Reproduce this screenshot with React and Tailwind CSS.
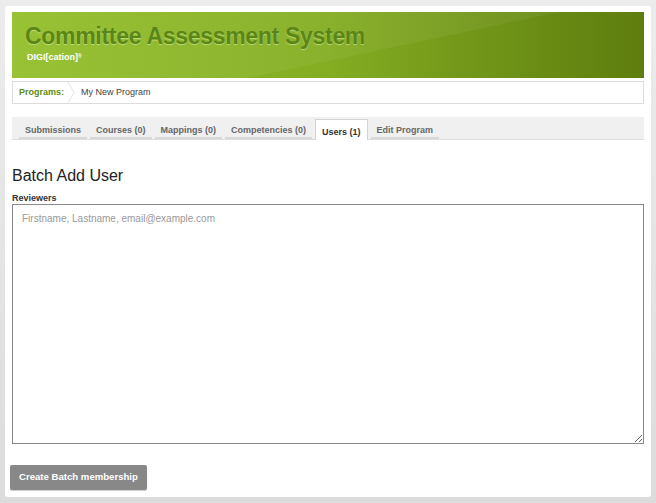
import React from 'react';

const tabs = [
  { label: 'Submissions' },
  { label: 'Courses (0)' },
  { label: 'Mappings (0)' },
  { label: 'Competencies (0)' },
  { label: 'Users (1)', active: true },
  { label: 'Edit Program' },
];

const Banner = () => (
  <div className="relative h-[66px] overflow-hidden bg-gradient-to-r from-[#93bf2a] via-[#84ad22] to-[#5e7d0e]">
    <div className="absolute inset-0 bg-[linear-gradient(168deg,rgba(255,255,255,0.05)_0%,rgba(255,255,255,0.05)_58%,rgba(0,0,0,0)_58%)]" />
    <div className="relative pl-[13px] pt-[10px]">
      <h1 className="text-[23px] leading-[28px] font-bold text-[#5a8615] [text-shadow:0_1px_1px_rgba(225,245,180,0.55)] tracking-[-0.3px]">
        Committee Assessment System
      </h1>
      <div className="mt-[1px] ml-[2px] text-[9px] font-bold leading-[12px] text-white">
        DIGI[cation]<sup className="text-[5px]">®</sup>
      </div>
    </div>
  </div>
);

const Breadcrumb = () => (
  <div className="mt-[3px] flex h-[23px] items-center border border-[#dcdcdc] bg-white text-[9px]">
    <span className="pl-[6px] font-bold text-[#5d8a16]">Programs:</span>
    <svg width="8" height="21" viewBox="0 0 8 21" className="ml-[4px]">
      <path d="M0 0 L6 10.5 L0 21" fill="none" stroke="#e2e2e2" strokeWidth="1" />
    </svg>
    <span className="ml-[5px] text-[#444]">My New Program</span>
  </div>
);

const Tabs = () => (
  <div className="mt-[13px] flex h-[23px] items-end gap-[3px] border-b border-[#ddd] bg-[#f0f0f0] pl-[7px]">
    {tabs.map((t) =>
      t.active ? (
        <div
          key={t.label}
          className="-mb-px flex h-[21px] items-center border border-b-0 border-[#d4d4d4] bg-white px-[6px] pt-[5px] text-[9px] font-bold leading-none text-[#333]"
        >
          {t.label}
        </div>
      ) : (
        <div
          key={t.label}
          className="flex h-[20px] items-center border-b-2 border-[#d8d8d8] px-[6px] pt-[5px] text-[9px] font-bold leading-none text-[#666]"
        >
          {t.label}
        </div>
      )
    )}
  </div>
);

export default function App() {
  return (
    <div className="h-[503px] w-[656px] bg-gradient-to-b from-[#ececec] to-[#dcdcdc] p-[6px_5px] font-['Liberation_Sans',Arial,sans-serif]">
      <div className="h-[491px] rounded-[3px] bg-white px-[7px] pt-[6px]">
        <Banner />
        <Breadcrumb />
        <Tabs />
        <h2 className="mt-[26px] text-[16px] leading-[20px] text-[#222]">Batch Add User</h2>
        <label className="mt-[7px] block text-[9px] font-bold leading-[11px] text-[#333]">Reviewers</label>
        <textarea
          className="block h-[240px] w-full resize border border-[#8a8a8a] px-[9px] pt-[6px] pb-[9px] text-[10px] placeholder:text-[#999] outline-none"
          placeholder="Firstname, Lastname, email@example.com"
        />
        <button className="-ml-[2px] mt-[21px] h-[25px] rounded-[2px] bg-[#888] px-[9px] text-[9.6px] font-bold text-white shadow-[0_1px_1px_rgba(0,0,0,0.2)]">
          Create Batch membership
        </button>
      </div>
    </div>
  );
}
